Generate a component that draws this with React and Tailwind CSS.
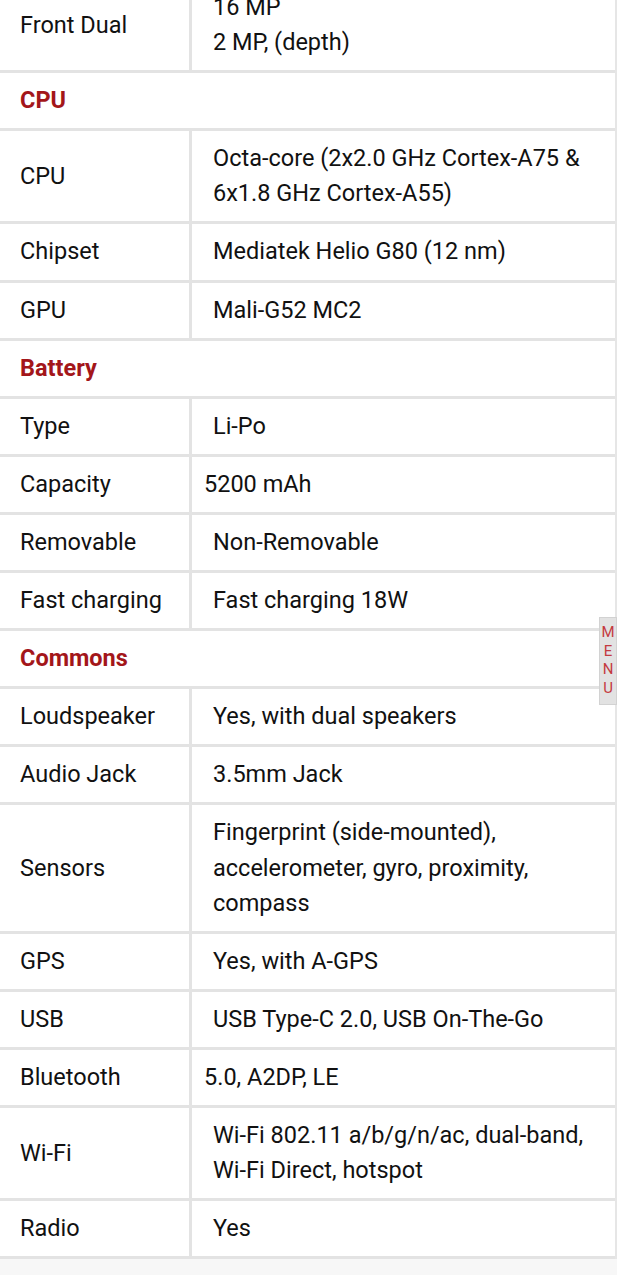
import React from 'react';

const specs = [
  { label: 'Front Dual', value: ['16 MP', '2 MP, (depth)'], first: true },
  { section: 'CPU' },
  { label: 'CPU', value: ['Octa-core (2x2.0 GHz Cortex-A75 &', '6x1.8 GHz Cortex-A55)'] },
  { label: 'Chipset', value: ['Mediatek Helio G80 (12 nm)'] },
  { label: 'GPU', value: ['Mali-G52 MC2'] },
  { section: 'Battery' },
  { label: 'Type', value: ['Li-Po'] },
  { label: 'Capacity', value: ['5200 mAh'], tight: true },
  { label: 'Removable', value: ['Non-Removable'] },
  { label: 'Fast charging', value: ['Fast charging 18W'] },
  { section: 'Commons' },
  { label: 'Loudspeaker', value: ['Yes, with dual speakers'] },
  { label: 'Audio Jack', value: ['3.5mm Jack'] },
  { label: 'Sensors', value: ['Fingerprint (side-mounted),', 'accelerometer, gyro, proximity,', 'compass'] },
  { label: 'GPS', value: ['Yes, with A-GPS'] },
  { label: 'USB', value: ['USB Type-C 2.0, USB On-The-Go'] },
  { label: 'Bluetooth', value: ['5.0, A2DP, LE'], tight: true },
  { label: 'Wi-Fi', value: ['Wi-Fi 802.11 a/b/g/n/ac, dual-band,', 'Wi-Fi Direct, hotspot'] },
  { label: 'Radio', value: ['Yes'] },
];

const SpecRow = ({ row }) => {
  if (row.section) {
    return (
      <div className="border-b-[3px] border-[#e3e3e3] px-[20px] py-[10px] leading-[35.1px] font-bold text-[#a3161a]">
        {row.section}
      </div>
    );
  }
  return (
    <div className="flex border-b-[3px] border-[#e3e3e3]">
      <div className="w-[189px] shrink-0 flex items-center px-[20px] py-[10px] leading-[35.1px]">
        {row.label}
      </div>
      <div
        className={
          row.tight
            ? 'flex-1 border-l-[3px] border-[#e3e3e3] pl-[12px] py-[10px] leading-[35.1px] flex flex-col justify-center'
            : 'flex-1 border-l-[3px] border-[#e3e3e3] pl-[21px] py-[10px] leading-[35.1px] flex flex-col justify-center'
        }
      >
        {row.value.map((line) => (
          <span key={line} className="whitespace-nowrap">{line}</span>
        ))}
      </div>
    </div>
  );
};

const App = () => {
  return (
    <div
      className="relative min-h-screen bg-[#f7f7f7] overflow-hidden text-[23.5px] text-[#111111]"
      style={{ fontFamily: 'Roboto, "Liberation Sans", sans-serif' }}
    >
      <div className="-mt-[20px] bg-white border-r-2 border-[#e6e6e6]">
        {specs.map((row, i) => (
          <SpecRow key={i} row={row} />
        ))}
      </div>

      {/* Кнопка меню збоку */}
      <div className="absolute top-[617px] right-0 w-[18px] h-[88px] bg-[#e2e2e2] border border-[#d2d2d2] flex flex-col items-center pt-[5px] text-[15px] leading-[18.5px] text-[#c43a40]">
        <span>M</span>
        <span>E</span>
        <span>N</span>
        <span>U</span>
      </div>
    </div>
  );
};

export default App;
